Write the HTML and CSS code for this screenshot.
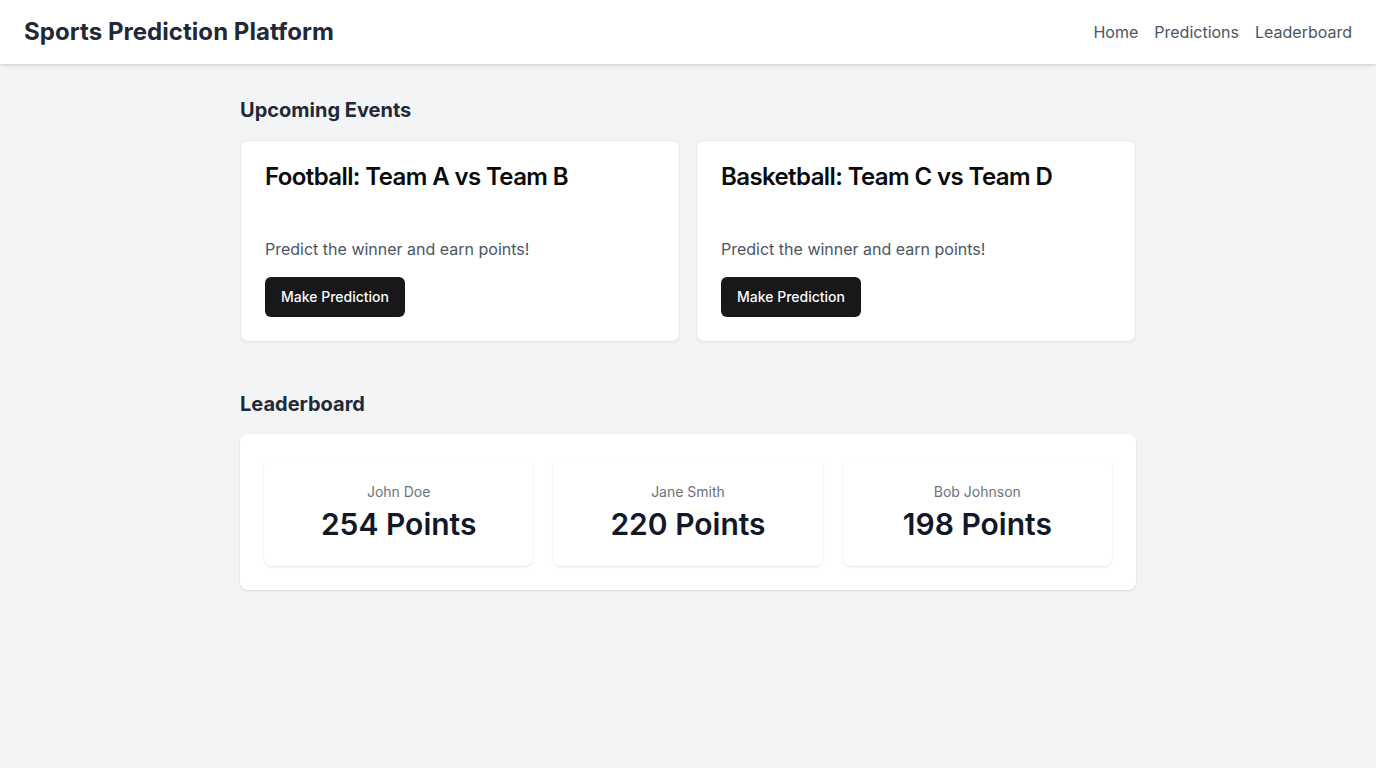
FILE: index.html
```html
<!DOCTYPE html>
<html lang="en">
<head>
<meta charset="utf-8">
<title>Sports Prediction Platform</title>
<link rel="stylesheet" href="styles.css">
</head>
<body>
<header class="topbar">
  <h1 class="brand">Sports Prediction Platform</h1>
  <nav class="nav">
    <a href="#">Home</a>
    <a href="#">Predictions</a>
    <a href="#">Leaderboard</a>
  </nav>
</header>
<main class="main">
  <section class="section">
    <h2 class="section-title">Upcoming Events</h2>
    <div class="events">
      <div class="card">
        <h3 class="card-title">Football: Team A vs Team B</h3>
        <p class="card-desc">Predict the winner and earn points!</p>
        <button class="btn">Make Prediction</button>
      </div>
      <div class="card">
        <h3 class="card-title">Basketball: Team C vs Team D</h3>
        <p class="card-desc">Predict the winner and earn points!</p>
        <button class="btn">Make Prediction</button>
      </div>
    </div>
  </section>
  <section class="section">
    <h2 class="section-title">Leaderboard</h2>
    <div class="board">
      <div class="stat">
        <div class="stat-name">John Doe</div>
        <div class="stat-value">254 Points</div>
      </div>
      <div class="stat">
        <div class="stat-name">Jane Smith</div>
        <div class="stat-value">220 Points</div>
      </div>
      <div class="stat">
        <div class="stat-name">Bob Johnson</div>
        <div class="stat-value">198 Points</div>
      </div>
    </div>
  </section>
</main>
</body>
</html>
```
FILE: styles.css
```css
* { box-sizing: border-box; }
html, body { margin: 0; padding: 0; }
body {
  font-family: Inter, "Noto Sans", sans-serif;
  background: #f3f4f6;
  color: #1f2937;
  min-height: 768px;
}
.topbar {
  height: 64px;
  background: #fff;
  display: flex;
  align-items: center;
  justify-content: space-between;
  padding: 0 24px;
  box-shadow: 0 1px 3px rgba(0,0,0,0.1), 0 2px 4px rgba(0,0,0,0.06);
  position: relative;
}
.brand {
  margin: 0;
  font-size: 24px;
  line-height: 32px;
  font-weight: 700;
  color: #1f2937;
  letter-spacing: 0.05px;
}
.nav { display: flex; gap: 16px; }
.nav a {
  color: #4b5563;
  text-decoration: none;
  font-size: 16px;
  line-height: 24px;
}
.main {
  width: 896px;
  margin: 0 auto;
  padding-top: 32px;
}
.section { margin-bottom: 48px; }
.section-title {
  margin: 0 0 16px;
  font-size: 20px;
  line-height: 28px;
  font-weight: 700;
  color: #1f2937;
}
.events {
  display: grid;
  grid-template-columns: 1fr 1fr;
  gap: 16px;
}
.card {
  background: #fff;
  border: 1px solid #e5e7eb;
  border-radius: 8px;
  box-shadow: 0 1px 2px rgba(0,0,0,0.05);
  padding: 24px;
}
.card-title {
  margin: 0;
  font-size: 24px;
  line-height: 24px;
  font-weight: 600;
  color: #0a0a0a;
  letter-spacing: -0.6px;
}
.card-desc {
  margin: 48px 0 16px;
  font-size: 16px;
  line-height: 24px;
  color: #4b5563;
}
.btn {
  display: block;
  height: 40px;
  padding: 0 16px 1px;
  border: 0;
  border-radius: 6px;
  background: #18181b;
  color: #fafafa;
  font-family: inherit;
  font-size: 14px;
  font-weight: 500;
}
.board {
  background: #fff;
  border-radius: 8px;
  box-shadow: 0 1px 3px rgba(0,0,0,0.08), 0 1px 2px rgba(0,0,0,0.04);
  padding: 24px;
  display: grid;
  grid-template-columns: repeat(3, 1fr);
  gap: 20px;
}
.stat {
  background: #fff;
  border-radius: 8px;
  box-shadow: 0 1px 3px rgba(0,0,0,0.08), 0 1px 2px rgba(0,0,0,0.04);
  padding: 24px;
  text-align: center;
}
.stat-name {
  font-size: 14px;
  line-height: 20px;
  color: #6b7280;
}
.stat-value {
  margin-top: 4px;
  font-size: 30px;
  line-height: 36px;
  font-weight: 600;
  color: #111827;
}
```
